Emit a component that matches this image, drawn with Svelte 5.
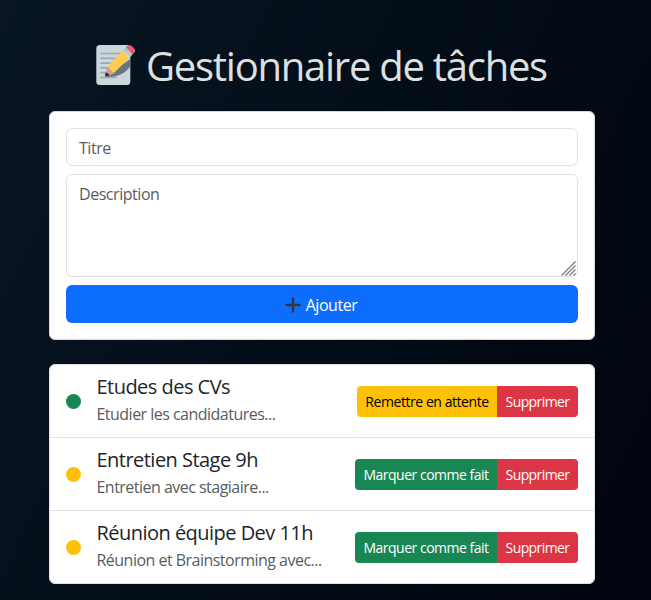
<script>
  let title = $state('');
  let description = $state('');
  let tasks = $state([
    { id: 1, title: 'Etudes des CVs', text: 'Etudier les candidatures...', done: true },
    { id: 2, title: 'Entretien Stage 9h', text: 'Entretien avec stagiaire...', done: false },
    { id: 3, title: 'Réunion équipe Dev 11h', text: 'Réunion et Brainstorming avec...', done: false }
  ]);

  function add() {
    if (!title.trim()) return;
    tasks.push({ id: Date.now(), title, text: description, done: false });
    title = '';
    description = '';
  }

  function remove(id) {
    tasks = tasks.filter((t) => t.id !== id);
  }
</script>

<main>
  <h1>
    <svg class="memo" viewBox="0 0 40 42" aria-hidden="true">
      <rect x="0.3" y="1" width="34" height="40" rx="3.5" fill="#ccd6dd" />
      <path d="M5 9.5h20M5 14.3h20M5 19.1h20M5 23.9h20M5 28.7h20M5 33.5h15" stroke="#99aab5" stroke-width="1.7" stroke-linecap="round" />
      <path d="M34.300 15v7C30 29 22 33.500 10 33l6-5z" fill="#66757f" />
      <path d="M11.5 22.500 26.500 6.500l7 7-16 16z" fill="#ffcc4d" />
      <path d="M11.500 22.500 9 31.500q-.2 1.400 1.400 1l7.600-3z" fill="#d99e82" />
      <path d="M9.800 28.500 9 31.500q-.2 1.400 1.400 1l3-1.200q-.8-2.700-3.600-2.800z" fill="#292f33" />
      <path d="m26.500 6.500 3.300-3.300 7 7-3.300 3.300z" fill="#ccd6dd" />
      <path d="m27.700 5.300 7 7M29 4l7 7" stroke="#99aab5" stroke-width="1" />
      <path d="m29.800 3.200 1.700-1.500q1.800-1.600 4.500.6l2 2q2 2.600.4 4.300l-1.600 1.600z" fill="#ea596e" />
    </svg>
    <span>Gestionnaire de tâches</span>
  </h1>

  <form class="card" onsubmit={(e) => { e.preventDefault(); add(); }}>
    <input placeholder="Titre" bind:value={title} />
    <div class="area">
      <textarea placeholder="Description" bind:value={description}></textarea>
      <svg class="grip" viewBox="0 0 15 15" aria-hidden="true">
        <path d="M.5 14.500 14.500.5M4.500 14.500l10-10M8.500 14.500l6-6M12.500 14.500l2-2" />
      </svg>
    </div>
    <button class="add" type="submit">
      <svg viewBox="0 0 16 16" aria-hidden="true"><path d="M8 1.500v13M1.500 8h13" /></svg>
      <span>Ajouter</span>
    </button>
  </form>

  <ul>
    {#each tasks as task (task.id)}
      <li>
        <i class:done={task.done}></i>
        <div class="info">
          <h5>{task.title}</h5>
          <p>{task.text}</p>
        </div>
        <div class="group">
          <button class={task.done ? 'warning' : 'success'} onclick={() => (task.done = !task.done)}>
            {task.done ? 'Remettre en attente' : 'Marquer comme fait'}
          </button>
          <button class="danger" onclick={() => remove(task.id)}>Supprimer</button>
        </div>
      </li>
    {/each}
  </ul>
</main>

<style>
  :global(body) {
    margin: 0;
    background: #020812;
  }
  main, main :global(*) {
    box-sizing: border-box;
  }
  main {
    min-height: 600px;
    padding: 42px 56px 16px 49px;
    overflow: hidden;
    background: linear-gradient(115deg, #081522 0%, #030d18 50%, #01040e 100%);
    font: 16px/24px 'Segoe UI', 'Open Sans', 'Noto Sans', sans-serif;
    letter-spacing: -0.45px;
    color: #212529;
  }
  h1 {
    display: flex;
    align-items: center;
    gap: 10px;
    height: 48px;
    margin: 0 0 21px;
    padding-left: 47px;
    font-size: 40px;
    font-weight: 400;
    line-height: 48px;
    letter-spacing: -1.26px;
    white-space: nowrap;
    color: #dee0e0;
  }
  .memo {
    flex: none;
    width: 40px;
    height: 42px;
    margin-top: -2px;
  }
  .card {
    display: flex;
    flex-direction: column;
    gap: 8px;
    padding: 16px;
    border: 1px solid #d5d8da;
    border-radius: 6px;
    background: #fff;
  }
  input, textarea {
    display: block;
    width: 100%;
    margin: 0;
    padding: 7px 12px 5px;
    border: 1px solid #dee2e6;
    border-radius: 6px;
    background: #fff;
    font: inherit;
    letter-spacing: inherit;
    color: #212529;
    outline: none;
  }
  input { height: 38px; }
  textarea { height: 103px; resize: none; }
  ::placeholder { color: #595c5f; opacity: 1; }
  .area { position: relative; }
  .grip {
    position: absolute;
    right: 2px;
    bottom: 1px;
    width: 15px;
    height: 15px;
    fill: none;
    stroke: #777;
    stroke-width: 1.2;
  }
  button {
    margin: 0;
    border: 0;
    font: inherit;
    letter-spacing: inherit;
    color: #fff;
    cursor: pointer;
    white-space: nowrap;
  }
  .add {
    display: flex;
    align-items: center;
    justify-content: center;
    gap: 5px;
    height: 38px;
    padding: 2px 2px 0 0;
    border-radius: 6px;
    background: #0d6efd;
  }
  .add svg {
    width: 16px;
    height: 16px;
    fill: none;
    stroke: #31373d;
    stroke-width: 2.4;
    stroke-linecap: round;
  }
  ul {
    margin: 24px 0 0;
    padding: 0;
    border: 1px solid #dee2e6;
    border-radius: 6px;
    background: #fff;
    list-style: none;
  }
  li {
    display: flex;
    align-items: center;
    height: 73px;
    padding: 0 16px;
    border-bottom: 1px solid #dee2e6;
  }
  li:last-child { height: 72px; border-bottom: 0; }
  i {
    flex: none;
    width: 15px;
    height: 15px;
    margin-right: 15.5px;
    border-radius: 50%;
    background: #ffc107;
  }
  i.done { background: #198754; }
  .info { flex: 1; min-width: 0; white-space: nowrap; }
  h5 {
    margin: 0 0 3px;
    font-size: 20px;
    font-weight: 400;
    line-height: 24px;
    letter-spacing: -0.53px;
  }
  p { margin: 0 0 2px; line-height: 24px; letter-spacing: -0.52px; color: #595c5f; }
  .group {
    display: flex;
    border-radius: 4px;
    overflow: hidden;
    font-size: 14px;
    line-height: 21px;
    letter-spacing: -0.44px;
  }
  .group button { height: 31px; padding: 1px 0 0; text-align: center; }
  .group .warning { width: 140px; background: #ffc107; color: #000; }
  .group .success { width: 142px; background: #198754; letter-spacing: -0.49px; }
  .group .danger { width: 81px; background: #dc3545; letter-spacing: -0.6px; }
</style>
